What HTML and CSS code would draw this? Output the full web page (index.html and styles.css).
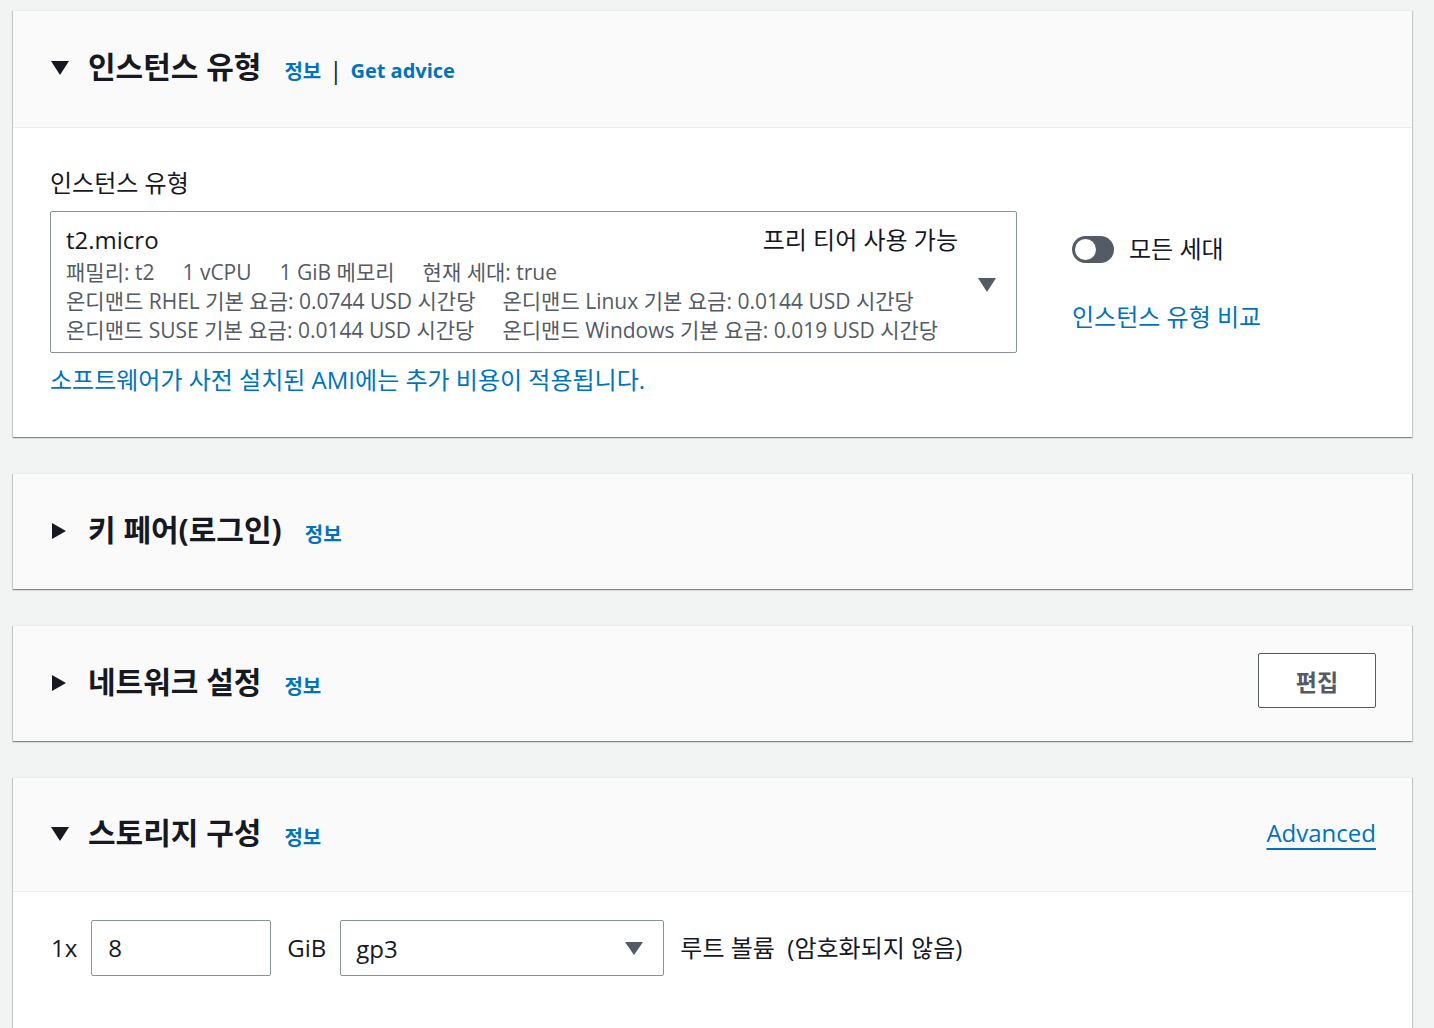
FILE: index.html
```html
<!DOCTYPE html>
<html lang="ko">
<head>
<meta charset="utf-8">
<link rel="stylesheet" href="styles.css">
</head>
<body>
<div class="page">

  <section class="panel">
    <div class="panel-head bordered">
      <span class="caret-down"></span>
      <h2 class="title">인스턴스 유형</h2>
      <a class="info">정보</a>
      <span class="sep">|</span>
      <a class="info">Get advice</a>
    </div>
    <div class="panel-body itype">
      <div class="itype-main">
        <div class="label">인스턴스 유형</div>
        <div class="select-box">
          <div class="select-content">
            <div class="row-top">
              <span class="name">t2.micro</span>
              <span class="free">프리 티어 사용 가능</span>
            </div>
            <div class="meta">
              <span>패밀리: t2</span><span>1 vCPU</span><span>1 GiB 메모리</span><span>현재 세대: true</span>
            </div>
            <div class="meta-grid">
              <span>온디맨드 RHEL 기본 요금: 0.0744 USD 시간당</span>
              <span>온디맨드 Linux 기본 요금: 0.0144 USD 시간당</span>
              <span>온디맨드 SUSE 기본 요금: 0.0144 USD 시간당</span>
              <span>온디맨드 Windows 기본 요금: 0.019 USD 시간당</span>
            </div>
          </div>
          <span class="sel-caret"></span>
        </div>
        <a class="link">소프트웨어가 사전 설치된 AMI에는 추가 비용이 적용됩니다.</a>
      </div>
      <div class="itype-side">
        <div class="toggle-row">
          <span class="toggle"><span class="knob"></span></span>
          <span class="toggle-label">모든 세대</span>
        </div>
        <a class="link">인스턴스 유형 비교</a>
      </div>
    </div>
  </section>

  <section class="panel">
    <div class="panel-head short">
      <span class="caret-right"></span>
      <h2 class="title">키 페어(로그인)</h2>
      <a class="info">정보</a>
    </div>
  </section>

  <section class="panel">
    <div class="panel-head short">
      <span class="caret-right"></span>
      <h2 class="title">네트워크 설정</h2>
      <a class="info">정보</a>
      <span class="spacer"></span>
      <button class="btn">편집</button>
    </div>
  </section>

  <section class="panel last">
    <div class="panel-head bordered storage-head">
      <span class="caret-down"></span>
      <h2 class="title">스토리지 구성</h2>
      <a class="info">정보</a>
      <span class="spacer"></span>
      <a class="adv">Advanced</a>
    </div>
    <div class="panel-body storage">
      <span class="txt">1x</span>
      <div class="input">8</div>
      <span class="txt">GiB</span>
      <div class="select-sm"><span>gp3</span><span class="sel-caret sm"></span></div>
      <span class="txt">루트 볼륨&nbsp;&nbsp;(암호화되지 않음)</span>
    </div>
  </section>

</div>
</body>
</html>
```

FILE: styles.css
```css
* { box-sizing: border-box; }
html, body { margin: 0; padding: 0; }
body {
  background: #f2f3f3;
  font-family: "Open Sans", "Noto Sans CJK KR", sans-serif;
  color: #16191f;
  overflow: hidden;
}
.page {
  padding: 10px 22px 0 13px;
  display: flex;
  flex-direction: column;
  gap: 36px;
}
.panel {
  background: #fff;
  box-shadow: 0 1px 1px 0 rgba(0,28,36,.3), 1px 1px 1px 0 rgba(0,28,36,.15), -1px 1px 1px 0 rgba(0,28,36,.15);
  border-top: 1px solid #eaeded;
}
.panel-head {
  background: #fafafa;
  display: flex;
  align-items: center;
  padding: 0 36px 0 38px;
  height: 117px;
}
.panel-head.bordered { border-bottom: 1px solid #eaeded; }
.panel-head.short { height: 115px; }
.panel-head.storage-head { height: 114px; }
.caret-down {
  width: 0; height: 0;
  border-left: 9px solid transparent;
  border-right: 9px solid transparent;
  border-top: 14px solid #16191f;
  margin-right: 19px;
  margin-top: -2px;
}
.caret-right {
  width: 0; height: 0;
  border-top: 8px solid transparent;
  border-bottom: 8px solid transparent;
  border-left: 14px solid #16191f;
  margin-left: 1px;
  margin-right: 22px;
  margin-top: -2px;
}
.title {
  margin: 0;
  font-size: 30px;
  font-weight: 700;
  line-height: 38px;
  margin-top: -4px;
}
.info {
  color: #0073bb;
  font-size: 20px;
  font-weight: 700;
  margin-left: 23px;
  margin-top: 3px;
}
.sep {
  font-size: 24px;
  margin: 0 0 0 8px;
  color: #16191f;
}
.sep + .info { margin-left: 8px; }
.spacer { flex: 1; }
.btn {
  width: 118px;
  height: 55px;
  background: #fff;
  border: 1px solid #545b64;
  border-radius: 2px;
  color: #545b64;
  font-family: "Open Sans", "Noto Sans CJK KR", sans-serif;
  font-size: 23px;
  font-weight: 700;
  margin-top: -6px;
}
.adv {
  color: #0073bb;
  font-size: 24px;
  text-decoration: underline;
  text-underline-offset: 6px;
  text-decoration-thickness: 2px;
  margin-top: -4px;
}

.panel-body.itype {
  display: flex;
  padding: 40px 37px 42px 37px;
  gap: 55px;
}
.itype-main { width: 967px; display: flex; flex-direction: column; }
.label { font-size: 24px; line-height: 30px; margin-bottom: 13px; }
.select-box {
  border: 1px solid #879596;
  border-radius: 2px;
  display: flex;
  align-items: center;
  padding: 13px 20px 7px 15px;
}
.select-content { flex: 1; }
.row-top {
  display: flex;
  justify-content: space-between;
  font-size: 24px;
  line-height: 30px;
}
.meta {
  display: flex;
  gap: 28px;
  font-size: 21px;
  line-height: 29px;
  color: #545b64;
  margin-top: 3px;
}
.meta-grid {
  display: grid;
  grid-template-columns: max-content max-content;
  column-gap: 27px;
  font-size: 21px;
  line-height: 29px;
  color: #545b64;
}
.sel-caret {
  width: 0; height: 0;
  border-left: 9.5px solid transparent;
  border-right: 9.5px solid transparent;
  border-top: 14px solid #545b64;
  margin-left: 20px;
  margin-top: 0;
}
.link {
  color: #0073bb;
  font-size: 24px;
  line-height: 30px;
  margin-top: 12px;
}
.itype-side {
  display: flex;
  flex-direction: column;
  padding-top: 66px;
}
.toggle-row { display: flex; align-items: center; gap: 15px; }
.toggle {
  width: 42px;
  height: 27px;
  border-radius: 14px;
  background: #545b64;
  display: flex;
  align-items: center;
  padding: 0 3px;
}
.knob {
  width: 21px; height: 21px;
  border-radius: 50%;
  background: #fff;
}
.toggle-label { font-size: 24px; line-height: 30px; }
.itype-side .link { margin-top: 38px; }

.panel-body.storage {
  display: flex;
  align-items: flex-start;
  padding: 28px 37px 60px 38px;
  height: 200px;
}
.txt { font-size: 24px; line-height: 56px; }
.input {
  width: 180px;
  height: 56px;
  border: 1px solid #879596;
  border-radius: 2px;
  font-size: 24px;
  line-height: 54px;
  padding-left: 16px;
  margin: 0 16px 0 14px;
}
.select-sm {
  width: 324px;
  height: 56px;
  border: 1px solid #879596;
  border-radius: 2px;
  font-size: 24px;
  display: flex;
  align-items: center;
  justify-content: space-between;
  padding: 0 20px 0 15px;
  margin: 0 16px 0 14px;
}
.sel-caret.sm { margin-top: 0; border-left-width: 9px; border-right-width: 9px; border-top-width: 13px; }
```
